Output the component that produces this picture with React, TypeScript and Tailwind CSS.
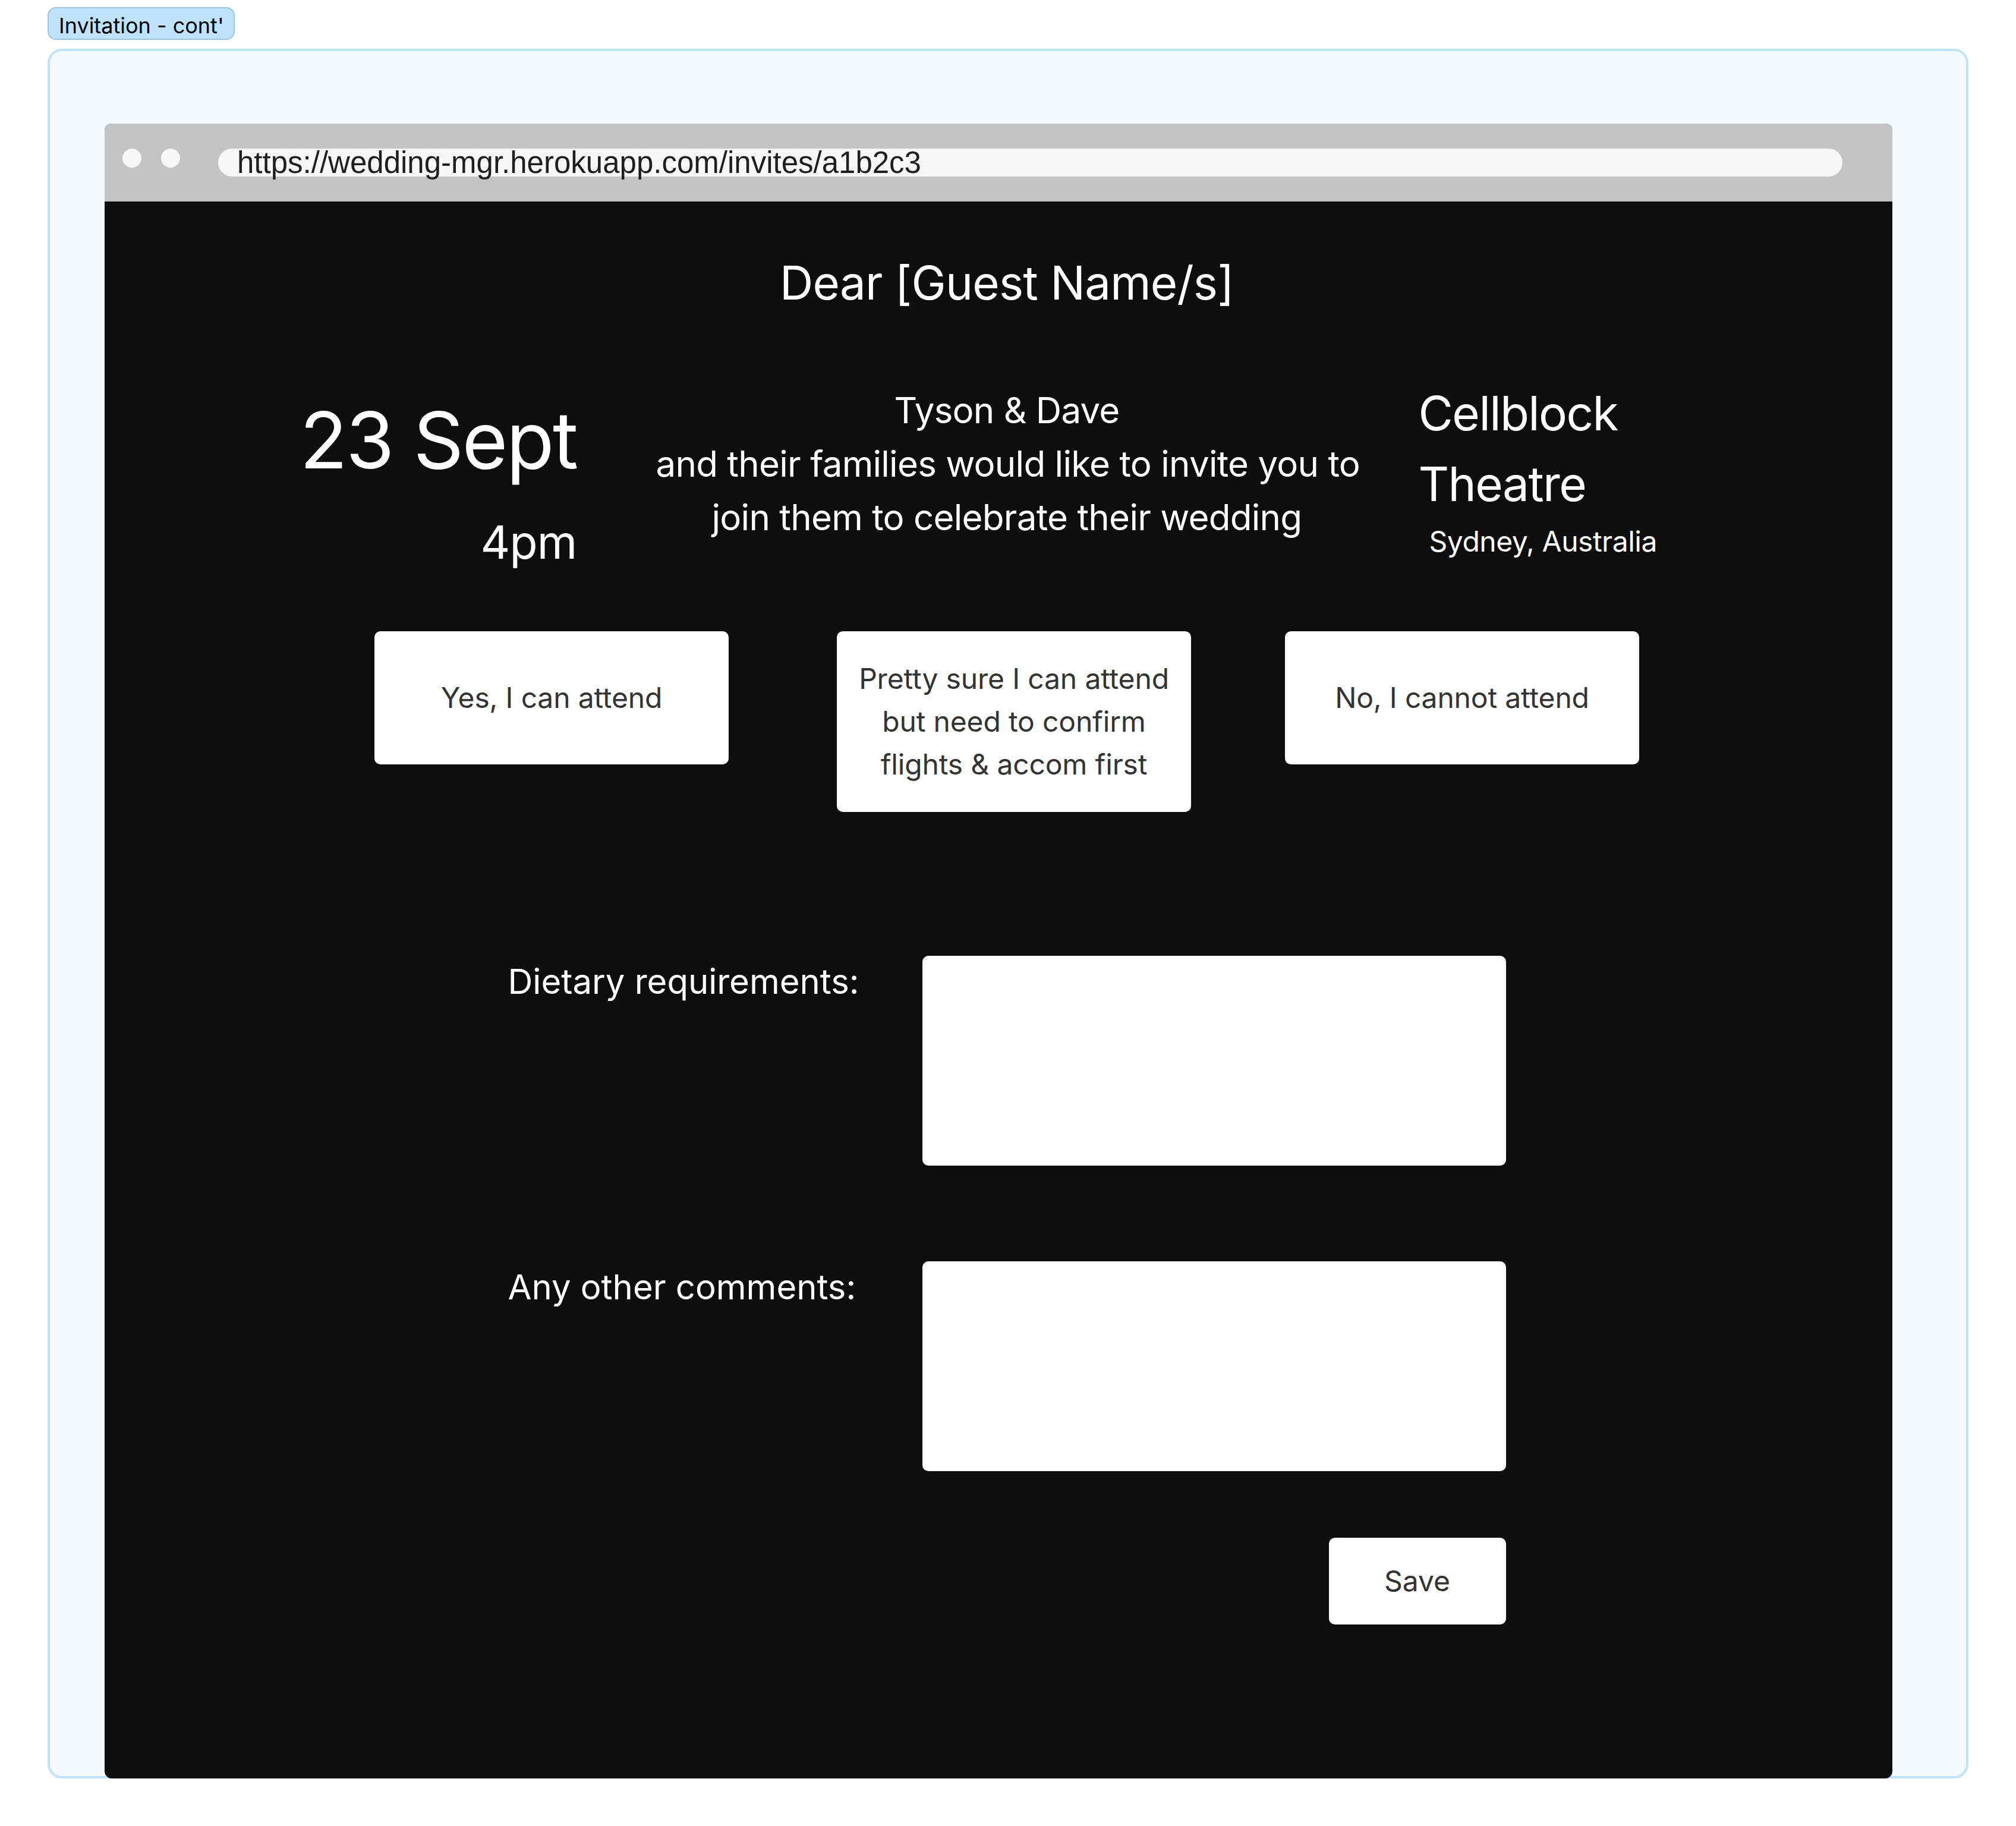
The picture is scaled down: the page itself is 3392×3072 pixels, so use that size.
import React from "react";

export default function App() {
  return (
    <div className="w-[3392px] h-[3072px] bg-white pt-[12px] px-[80px] font-['Inter','Noto_Sans',sans-serif]">
      <div className="flex h-[55px] w-[315px] items-center rounded-[14px] border-2 border-[#9ec6e3] bg-[#bfe3fd] pl-[17px] pt-[6px] text-[36px] leading-none text-black">
        Invitation - cont'
      </div>
      <div className="mt-[15px] rounded-[24px] border-4 border-[#bfe3fd] bg-[#f4f9fe] pt-[122px] pl-[92px] pr-[124px]">
        <div className="relative -mb-[4px] overflow-hidden rounded-[12px] bg-[#0e0e0e]">
          {/* title bar */}
          <div className="flex h-[131px] items-start bg-[#c4c4c4] pt-[42px] pl-[30px] pr-[84px]">
            <div className="h-[32px] w-[32px] rounded-full bg-[#f7f7f7]" />
            <div className="ml-[33px] h-[32px] w-[32px] rounded-full bg-[#f7f7f7]" />
            <div className="ml-[64px] h-[47px] flex-1 rounded-full bg-[#f7f7f7] pl-[32px] font-['Liberation_Sans',Arial,sans-serif] text-[51px] leading-[47px] text-[#1f1f1f] whitespace-nowrap">
              https://wedding-mgr.herokuapp.com/invites/a1b2c3
            </div>
          </div>

          {/* content */}
          <div className="pl-[28px] pt-[91px] pb-[259px] text-white">
            <div className="text-center text-[78px] leading-[92px] tracking-[-0.01em]">Dear [Guest Name/s]</div>

            <div className="mt-[113px] grid h-[427px] grid-cols-[1fr_1181px_1fr]">
              <div className="flex flex-col items-end pr-[133px] pt-[26px]">
                <div className="text-[132px] leading-[158px] tracking-[-0.02em] whitespace-nowrap">23 Sept</div>
                <div className="mt-[47px] text-[77px] leading-[92px] tracking-[-0.01em]">4pm</div>
              </div>
              <div className="pt-[10px] text-center text-[60px] leading-[90px] tracking-[-0.012em] whitespace-nowrap">
                Tyson &amp; Dave
                <br />
                and their families would like to invite you to
                <br />
                join them to celebrate their wedding
              </div>
              <div className="flex flex-col items-start pl-[102px]">
                <div className="text-[80px] leading-[119px] tracking-[-0.02em] whitespace-nowrap">
                  Cellblock
                  <br />
                  Theatre
                </div>
                <div className="mt-[9px] pl-[18px] text-[48px] leading-[58px] tracking-[-0.01em] whitespace-nowrap">Sydney, Australia</div>
              </div>
            </div>

            <div className="flex items-start justify-center text-[#333333] tracking-[-0.01em]">
              <button className="flex h-[224px] w-[596px] items-center justify-center rounded-[10px] bg-white text-[48px] leading-[72px]">
                Yes, I can attend
              </button>
              <button className="ml-[182px] flex h-[304px] w-[596px] items-center justify-center rounded-[10px] bg-white text-center text-[48px] leading-[72px]">
                <span>
                  Pretty sure I can attend
                  <br />
                  but need to confirm
                  <br />
                  flights &amp; accom first
                </span>
              </button>
              <button className="ml-[158px] flex h-[224px] w-[596px] items-center justify-center rounded-[10px] bg-white text-[48px] leading-[72px]">
                No, I cannot attend
              </button>
            </div>

            <div className="mx-auto mt-[242px] w-[1679px]">
              <div className="grid grid-cols-[697px_982px]">
                <label className="text-[58px] leading-[87px]">Dietary requirements:</label>
                <textarea className="h-[353px] w-[982px] resize-none rounded-[10px] border-0 bg-white outline-none" />
              </div>
              <div className="mt-[161px] grid grid-cols-[697px_982px]">
                <label className="text-[58px] leading-[87px]">Any other comments:</label>
                <textarea className="h-[353px] w-[982px] resize-none rounded-[10px] border-0 bg-white outline-none" />
              </div>
              <div className="mt-[112px] flex justify-end">
                <button className="flex h-[146px] w-[298px] items-center justify-center rounded-[10px] bg-white text-[48px] leading-[72px] text-[#333333]">
                  Save
                </button>
              </div>
            </div>
          </div>
        </div>
      </div>
    </div>
  );
}
